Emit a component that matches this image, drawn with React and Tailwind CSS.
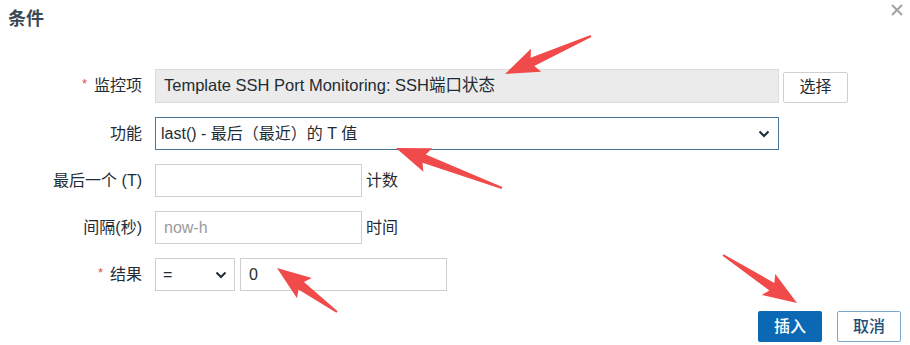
import React from 'react';

const FONT = { fontFamily: '"Liberation Sans", "Noto Sans CJK SC", sans-serif' };

// annotation arrows drawn over the dialog
const arrows = [
    { tail: [591, 36], tip: [505, 74] },
    { tail: [502, 188], tip: [396, 148] },
    { tail: [337, 312], tip: [277, 268] },
    { tail: [723, 255], tip: [797, 303] },
];

const arrowPoints = ({ tail, tip }) => {
    const [tx, ty] = tail;
    const [px, py] = tip;
    const len = Math.hypot(px - tx, py - ty);
    const dx = (px - tx) / len;
    const dy = (py - ty) / len;
    const nx = -dy;
    const ny = dx;
    const headLen = 30;
    const shaft = 4.5;
    const half = 12.5;
    const sx = px - dx * headLen;
    const sy = py - dy * headLen;
    const bx = px - dx * (headLen + 4);
    const by = py - dy * (headLen + 4);
    const pts = [
        [tx + nx * 1, ty + ny * 1],
        [sx + nx * shaft, sy + ny * shaft],
        [bx + nx * half, by + ny * half],
        [px, py],
        [bx - nx * half, by - ny * half],
        [sx - nx * shaft, sy - ny * shaft],
        [tx - nx * 1, ty - ny * 1],
    ];
    return pts.map(p => p.map(v => v.toFixed(1)).join(',')).join(' ');
};

const Chevron = () => (
    <svg width="12" height="8" viewBox="0 0 12 8" fill="none">
        <path d="M1.5 1.5 L6 6 L10.5 1.5" stroke="#1f2c33" strokeWidth="2" />
    </svg>
);

const Label = ({ required, children }) => (
    <div className="w-[142px] shrink-0 text-right text-[16px] text-[#1f2c33]">
        {required && <span className="text-[#e0504a] mr-[7px] text-[13px] align-top">*</span>}
        {children}
    </div>
);

const App = () => {
    return (
        <div className="relative w-[910px] h-[345px] bg-white overflow-hidden" style={FONT}>
            <div className="flex justify-between h-[40px]">
                <h2 className="pl-[8px] pt-[6px] text-[18px] leading-[26px] font-bold text-[#3a4856]">条件</h2>
                <svg className="mr-[6px] mt-[3px]" width="14" height="14" viewBox="0 0 14 14">
                    <path d="M2 2 L12 12 M12 2 L2 12" stroke="#a3a3a3" strokeWidth="2" />
                </svg>
            </div>

            <div className="flex flex-col gap-[14px] pt-[29px]">
                <div className="flex items-center h-[33px]">
                    <Label required>监控项</Label>
                    <div className="ml-[13px] w-[624px] h-[34px] flex items-center px-[8px] bg-[#ebebeb] border border-[#dcdcdc] text-[16.5px] text-[#1f2c33]">
                        Template SSH Port Monitoring: SSH端口状态
                    </div>
                    <button className="ml-[4px] mt-[3px] w-[65px] h-[31px] bg-white border border-[#cfcfcf] rounded-[2px] text-[16px] text-[#1f2c33]">
                        选择
                    </button>
                </div>

                <div className="flex items-center h-[33px] mt-[1px]">
                    <Label>功能</Label>
                    <div className="ml-[13px] w-[624px] h-[33px] flex items-center justify-between pl-[5px] pr-[8px] bg-white border border-[#4a7596] text-[16px] text-[#1f2c33]">
                        <span>last() - 最后（最近）的 T 值</span>
                        <Chevron />
                    </div>
                </div>

                <div className="flex items-center h-[33px]">
                    <Label>最后一个 (T)</Label>
                    <div className="ml-[13px] w-[207px] h-[33px] bg-white border border-[#cfcfcf]" />
                    <span className="ml-[4px] text-[16px] text-[#1f2c33]">计数</span>
                </div>

                <div className="flex items-center h-[33px]">
                    <Label>间隔(秒)</Label>
                    <div className="ml-[13px] w-[207px] h-[33px] flex items-center px-[8px] bg-white border border-[#cfcfcf] text-[16px] text-[#9a9a9a]">
                        now-h
                    </div>
                    <span className="ml-[4px] text-[16px] text-[#1f2c33]">时间</span>
                </div>

                <div className="flex items-center h-[33px]">
                    <Label required>结果</Label>
                    <div className="ml-[13px] w-[80px] h-[33px] flex items-center justify-between pl-[7px] pr-[7px] bg-white border border-[#cfcfcf] text-[16px] text-[#1f2c33]">
                        <span>=</span>
                        <Chevron />
                    </div>
                    <div className="ml-[5px] w-[207px] h-[33px] flex items-center px-[8px] bg-white border border-[#cfcfcf] text-[16px] text-[#1f2c33]">
                        0
                    </div>
                </div>
            </div>

            <div className="flex justify-end gap-[15px] pr-[9px] mt-[20px]">
                <button className="w-[64px] h-[31px] bg-[#0b68b5] rounded-[2px] text-[16px] font-medium text-white">插入</button>
                <button className="w-[64px] h-[31px] bg-white border border-[#7ea7c7] rounded-[2px] text-[16px] font-medium text-[#1e4f78]">取消</button>
            </div>

            <svg className="absolute inset-0 pointer-events-none" width="910" height="345">
                {arrows.map((a, i) => (
                    <polygon key={i} points={arrowPoints(a)} fill="#f04a4a" />
                ))}
            </svg>
        </div>
    );
};

export default App;
